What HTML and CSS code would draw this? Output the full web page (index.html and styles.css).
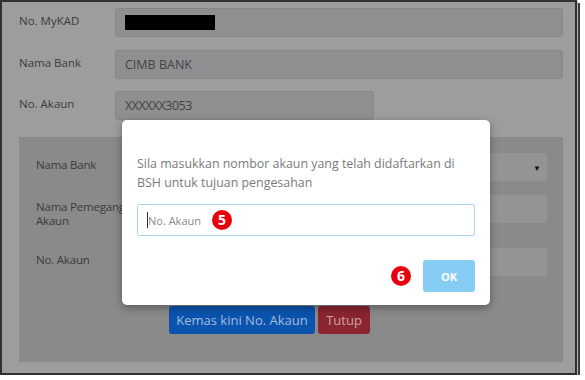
FILE: index.html
```html
<!DOCTYPE html>
<html lang="ms">
  <head>
    <meta charset="utf-8" />
    <title>Kemas kini No. Akaun</title>
    <link rel="stylesheet" href="styles.css">
  </head>
  <body>
    <div class="frame">
      <div class="form">
        <div class="row">
          <label>No. MyKAD</label>
          <div class="field"><span class="redact"></span></div>
        </div>
        <div class="row">
          <label>Nama Bank</label>
          <div class="field">CIMB BANK</div>
        </div>
        <div class="row">
          <label>No. Akaun</label>
          <div class="field short">XXXXXX3053</div>
        </div>
      </div>

      <div class="panel">
        <div class="prow first">
          <label>Nama Bank</label>
          <div class="pfield select"><span class="caret">&#9660;</span></div>
        </div>
        <div class="prow second">
          <label>Nama Pemegang<br />Akaun</label>
          <div class="pfield"></div>
        </div>
        <div class="prow">
          <label>No. Akaun</label>
          <div class="pfield"></div>
        </div>
        <div class="actions">
          <button class="btn blue">Kemas kini No. Akaun</button>
          <button class="btn red">Tutup</button>
        </div>
      </div>

      <!-- dialog pengesahan -->
      <div class="modal">
        <p class="modal-text">Sila masukkan nombor akaun yang telah didaftarkan di BSH untuk tujuan pengesahan</p>
        <div class="modal-input">
          <span class="cursor"></span><span class="placeholder">No. Akaun</span><span class="step">5</span>
        </div>
        <div class="modal-footer">
          <span class="step big">6</span>
          <button class="btn ok">OK</button>
        </div>
      </div>
    </div>
  </body>
</html>
```

FILE: styles.css
```css
html,
body {
  margin: 0;
  background: #fff;
  font-family: "Open Sans", "Liberation Sans", sans-serif;
}

.frame {
  position: relative;
  box-sizing: border-box;
  width: 577px;
  height: 375px;
  padding: 6px 12px 0 17px;
  border: 2px solid #303030;
  background: #9d9d9d;
  box-shadow: 1px 1px 0 #b5b5b5, 3px 3px 0 #3a3a3a;
}

label {
  display: block;
  width: 96px;
  flex: none;
  font-size: 11.5px;
  line-height: 14px;
  color: #3b3b3b;
  white-space: nowrap;
}

.form {
  display: flex;
  flex-direction: column;
  gap: 12.5px;
}

.row {
  display: flex;
}

.row label {
  padding-top: 6px;
}

.field {
  flex: 1;
  box-sizing: border-box;
  height: 29px;
  padding-left: 9px;
  border: 1px solid #878787;
  border-radius: 3px;
  background: #8e8f91;
  font-size: 12.5px;
  line-height: 27px;
  color: #434343;
  display: flex;
  align-items: center;
}

.field.short {
  flex: none;
  width: 259px;
  letter-spacing: -0.5px;
}

.redact {
  width: 90px;
  height: 15px;
  background: #000;
}

.panel {
  margin-top: 17px;
  width: 544px;
  box-sizing: border-box;
  padding: 16px 16px 28px 17px;
  background: #8a8a8a;
}

.prow {
  display: flex;
  margin-bottom: 20px;
}

.prow.first {
  margin-bottom: 14px;
}

.prow label {
  padding-top: 5px;
  letter-spacing: -0.2px;
}

.pfield {
  flex: 1;
  height: 28px;
  border-radius: 3px;
  background: #949494;
  display: flex;
  align-items: center;
  justify-content: flex-end;
}

.caret {
  font-size: 8px;
  color: #111;
  margin-right: 6px;
}

.actions {
  display: flex;
  gap: 3px;
  margin-top: 30px;
  margin-left: 133px;
}

.btn {
  height: 28px;
  border: 0;
  border-radius: 3px;
  font-family: inherit;
  font-size: 13px;
  padding: 0;
  white-space: nowrap;
}

.btn.blue {
  width: 146px;
  background: #0a54b0;
  color: #a6bcda;
}

.btn.red {
  width: 52px;
  background: #8a2531;
  color: #d0a2a8;
}

.modal {
  position: absolute;
  left: 120px;
  top: 118px;
  width: 368px;
  height: 185px;
  box-sizing: border-box;
  padding: 34px 15px 0;
  background: #fff;
  border-radius: 5px;
  box-shadow: 0 3px 9px rgba(0, 0, 0, 0.35);
}

.modal-text {
  margin: 0;
  font-size: 12.4px;
  line-height: 19px;
  color: #7a7a7a;
}

.modal-input {
  margin-top: 12px;
  height: 32px;
  box-sizing: border-box;
  border: 1px solid #a9d6f5;
  border-radius: 2px;
  padding-left: 9px;
  display: flex;
  align-items: center;
}

.cursor {
  width: 1px;
  height: 16px;
  background: #333;
}

.placeholder {
  font-size: 11px;
  color: #8a8a8a;
}

.step {
  width: 20px;
  height: 20px;
  margin-left: 11px;
  border-radius: 50%;
  background: #e8000c;
  color: #fff;
  font-size: 14px;
  font-weight: 700;
  line-height: 20px;
  text-align: center;
}

.modal-footer {
  margin-top: 24px;
  display: flex;
  justify-content: flex-end;
  align-items: center;
  gap: 12px;
}

.step.big {
  margin-left: 0;
}

.btn.ok {
  width: 52px;
  height: 32px;
  background: #86cdf6;
  color: #fff;
  font-size: 11px;
  font-weight: 700;
}
```
